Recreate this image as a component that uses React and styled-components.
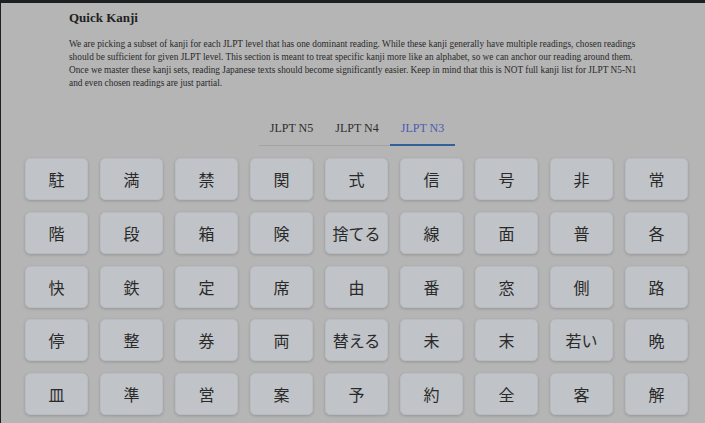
import React, { useState } from "react";
import styled, { createGlobalStyle } from "styled-components";

const Global = createGlobalStyle`
  html, body { margin: 0; padding: 0; background: #1d2023; }
  body { font-family: "Liberation Serif", "Times New Roman", serif; }
`;

const Page = styled.div`
  margin-top: 3px;
  margin-left: 1px;
  background: #b5b5b5;
  min-height: 420px;
  color: #1f1f1f;
`;

const Header = styled.div`
  padding: 7px 0 0 68px;
  width: 580px;
`;

const Title = styled.h1`
  margin: 0;
  font-size: 13px;
  font-weight: bold;
  line-height: 16px;
`;

const Intro = styled.p`
  margin: 12px 0 0;
  font-size: 9.3px;
  line-height: 13px;
  color: #2a2a2a;
`;

const TabBar = styled.div`
  display: flex;
  justify-content: center;
  margin-top: 26px;
  padding-left: 8px;
`;

const Tabs = styled.div`
  display: flex;
  border-bottom: 1px solid #a3a3a3;
`;

const Tab = styled.button`
  background: none;
  border: none;
  border-bottom: 2px solid ${(p) => (p.$active ? "#34609a" : "transparent")};
  margin-bottom: -1px;
  padding: 5px 11px 8px;
  font-family: "Liberation Serif", "Times New Roman", serif;
  font-size: 12px;
  color: ${(p) => (p.$active ? "#4a5bb0" : "#2d2d2d")};
  cursor: pointer;
`;

const Grid = styled.div`
  display: grid;
  grid-template-columns: repeat(9, 63px);
  grid-auto-rows: 42px;
  column-gap: 12px;
  row-gap: 11.8px;
  padding: 12px 0 0 24px;
`;

const KanjiButton = styled.button`
  background: #c0c3c7;
  border: 1px solid #b8bbbf;
  border-radius: 5px;
  box-shadow: 0 1px 3px rgba(0, 0, 0, 0.18);
  font-family: "Noto Sans CJK JP", "Noto Sans", sans-serif;
  font-size: 16px;
  color: #2a2a2a;
  display: flex;
  align-items: center;
  justify-content: center;
  padding: 0;
  cursor: pointer;
`;

const kanji = [
  "駐", "満", "禁", "関", "式", "信", "号", "非", "常",
  "階", "段", "箱", "険", "捨てる", "線", "面", "普", "各",
  "快", "鉄", "定", "席", "由", "番", "窓", "側", "路",
  "停", "整", "券", "両", "替える", "未", "末", "若い", "晩",
  "皿", "準", "営", "案", "予", "約", "全", "客", "解",
];

export default function App() {
  const [tab, setTab] = useState("N3");
  return (
    <>
      <Global />
      <Page>
        <Header>
          <Title>Quick Kanji</Title>
          <Intro>
            We are picking a subset of kanji for each JLPT level that has one dominant reading. While these kanji generally have multiple readings, chosen readings should be sufficient for given JLPT level. This section is meant to treat specific kanji more like an alphabet, so we can anchor our reading around them. Once we master these kanji sets, reading Japanese texts should become significantly easier. Keep in mind that this is NOT full kanji list for JLPT N5-N1 and even chosen readings are just partial.
          </Intro>
        </Header>
        <TabBar>
          <Tabs>
            {["N5", "N4", "N3"].map((t) => (
              <Tab key={t} $active={tab === t} onClick={() => setTab(t)}>
                JLPT {t}
              </Tab>
            ))}
          </Tabs>
        </TabBar>
        <Grid>
          {kanji.map((k, i) => (
            <KanjiButton key={i}>{k}</KanjiButton>
          ))}
        </Grid>
      </Page>
    </>
  );
}
